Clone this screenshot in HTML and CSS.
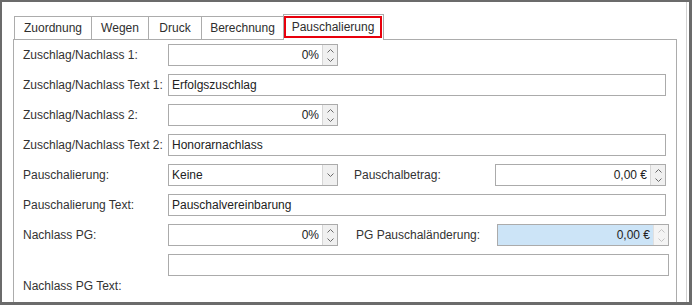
FILE: index.html
```html
<!DOCTYPE html>
<html lang="de">
<head>
<meta charset="utf-8">
<title>Pauschalierung</title>
<link rel="stylesheet" href="styles.css">
</head>
<body>
<div class="window">
  <div class="frame">
    <div class="tabs">
      <div class="tab tab-zuordnung">Zuordnung</div>
      <div class="tab tab-wegen">Wegen</div>
      <div class="tab tab-druck">Druck</div>
      <div class="tab tab-berechnung">Berechnung</div>
      <div class="tab tab-selected"><span class="tab-focus">Pauschalierung</span></div>
    </div>
    <div class="panel">
      <div class="row">
        <div class="label">Zuschlag/Nachlass 1:</div>
        <div class="field spin w-short">
          <span class="val">0%</span>
          <span class="spinner">
            <svg class="chev" width="7" height="4" viewBox="0 0 7 4"><path d="M0.5 3.5 L3.5 0.5 L6.5 3.5" /></svg>
            <svg class="chev" width="7" height="4" viewBox="0 0 7 4"><path d="M0.5 0.5 L3.5 3.5 L6.5 0.5" /></svg>
          </span>
        </div>
      </div>
      <div class="row">
        <div class="label">Zuschlag/Nachlass Text 1:</div>
        <div class="field text w-long">Erfolgszuschlag</div>
      </div>
      <div class="row">
        <div class="label">Zuschlag/Nachlass 2:</div>
        <div class="field spin w-short">
          <span class="val">0%</span>
          <span class="spinner">
            <svg class="chev" width="7" height="4" viewBox="0 0 7 4"><path d="M0.5 3.5 L3.5 0.5 L6.5 3.5" /></svg>
            <svg class="chev" width="7" height="4" viewBox="0 0 7 4"><path d="M0.5 0.5 L3.5 3.5 L6.5 0.5" /></svg>
          </span>
        </div>
      </div>
      <div class="row">
        <div class="label">Zuschlag/Nachlass Text 2:</div>
        <div class="field text w-long">Honorarnachlass</div>
      </div>
      <div class="row">
        <div class="label">Pauschalierung:</div>
        <div class="field combo w-short">
          <span class="cval">Keine</span>
          <span class="drop">
            <svg class="chev" width="7" height="4" viewBox="0 0 7 4"><path d="M0.5 0.5 L3.5 3.5 L6.5 0.5" /></svg>
          </span>
        </div>
        <div class="label2 label2-a">Pauschalbetrag:</div>
        <div class="field spin w-mid">
          <span class="val">0,00 €</span>
          <span class="spinner">
            <svg class="chev" width="7" height="4" viewBox="0 0 7 4"><path d="M0.5 3.5 L3.5 0.5 L6.5 3.5" /></svg>
            <svg class="chev" width="7" height="4" viewBox="0 0 7 4"><path d="M0.5 0.5 L3.5 3.5 L6.5 0.5" /></svg>
          </span>
        </div>
      </div>
      <div class="row">
        <div class="label">Pauschalierung Text:</div>
        <div class="field text w-long">Pauschalvereinbarung</div>
      </div>
      <div class="row">
        <div class="label">Nachlass PG:</div>
        <div class="field spin w-short">
          <span class="val">0%</span>
          <span class="spinner">
            <svg class="chev" width="7" height="4" viewBox="0 0 7 4"><path d="M0.5 3.5 L3.5 0.5 L6.5 3.5" /></svg>
            <svg class="chev" width="7" height="4" viewBox="0 0 7 4"><path d="M0.5 0.5 L3.5 3.5 L6.5 0.5" /></svg>
          </span>
        </div>
        <div class="label2 label2-b">PG Pauschaländerung:</div>
        <div class="field spin readonly w-mid2">
          <span class="val">0,00 €</span>
          <span class="spinner">
            <svg class="chev" width="7" height="4" viewBox="0 0 7 4"><path d="M0.5 3.5 L3.5 0.5 L6.5 3.5" /></svg>
            <svg class="chev" width="7" height="4" viewBox="0 0 7 4"><path d="M0.5 0.5 L3.5 3.5 L6.5 0.5" /></svg>
          </span>
        </div>
      </div>
      <div class="row row-last">
        <div class="label label-bottom">Nachlass PG Text:</div>
        <div class="field text w-long2"></div>
      </div>
    </div>
  </div>
</div>
</body>
</html>
```
FILE: styles.css
```css
* { box-sizing: border-box; }
html, body { margin: 0; padding: 0; background: #ffffff; }
body {
  font-family: "Liberation Sans", Arial, sans-serif;
  font-size: 12px;
  color: #333333;
}
.window {
  width: 692px;
  height: 305px;
  border-style: solid;
  border-color: #6b6b6b;
  border-width: 2px 3px 3px 2px;
  padding-right: 2px;
  overflow: hidden;
  background: #ffffff;
}
.frame {
  height: 100%;
  border-right: 1px solid #d2d2d2;
  padding: 12px 0 0 11px;
  display: flex;
  flex-direction: column;
}
.tabs {
  display: flex;
  align-items: flex-end;
  height: 25px;
  padding-left: 1px;
}
.tab {
  height: 23px;
  border-top: 1px solid #acacac;
  border-left: 1px solid #acacac;
  background: #ffffff;
  display: flex;
  align-items: center;
  justify-content: center;
  line-height: 14px;
  color: #2e2e2e;
}
.tab-zuordnung { width: 77px; }
.tab-wegen { width: 57px; }
.tab-druck { width: 53px; }
.tab-berechnung { width: 82px; }
.tab-selected {
  width: 101px;
  height: 26px;
  margin-bottom: -1px;
  border-right: 1px solid #acacac;
  padding: 1px 1px 2px 0;
  position: relative;
  z-index: 1;
  align-items: flex-start;
}
.tab-focus {
  display: flex;
  align-items: center;
  justify-content: center;
  width: 100%;
  height: 22px;
  border: 2px solid #e8000c;
}
.panel {
  width: 664px;
  height: 290px;
  flex: none;
  border: 1px solid #acacac;
  padding: 4px 0 0 9px;
  display: flex;
  flex-direction: column;
  gap: 8px;
}
.row {
  display: flex;
  align-items: center;
  height: 22px;
}
.row-last {
  height: 40px;
  align-items: flex-start;
}
.label {
  width: 145px;
  flex: none;
  line-height: 14px;
}
.label-bottom {
  align-self: flex-end;
  margin-bottom: 1px;
}
.label2 {
  width: 141px;
  flex: none;
  line-height: 14px;
}
.label2-a { margin-left: 16px; }
.label2-b { margin-left: 18px; }
.field {
  height: 22px;
  flex: none;
  border: 1px solid #ababab;
  background: #ffffff;
  display: flex;
  align-items: center;
  color: #222222;
}
.w-short { width: 170px; }
.w-mid { width: 171px; }
.w-mid2 { width: 172px; }
.w-long { width: 498px; }
.w-long2 { width: 501px; height: 22px; }
.text { padding-left: 3px; }
.val {
  flex: 1;
  text-align: right;
  padding-right: 3px;
}
.spinner, .drop {
  width: 15px;
  height: 100%;
  flex: none;
  background: #f0f0f0;
  border-left: 1px solid #d6d6d6;
  display: flex;
  flex-direction: column;
  align-items: center;
  justify-content: center;
  gap: 5px;
}
.chev path {
  fill: none;
  stroke: #6a6a6a;
  stroke-width: 1;
}
.readonly { background: #cce4f7; }
.readonly .spinner { background: #f4f4f4; border-left-color: #e0e0e0; }
.readonly .chev path { stroke: #c4c4c4; }
.combo .cval { flex: 1; padding-left: 3px; }
```
